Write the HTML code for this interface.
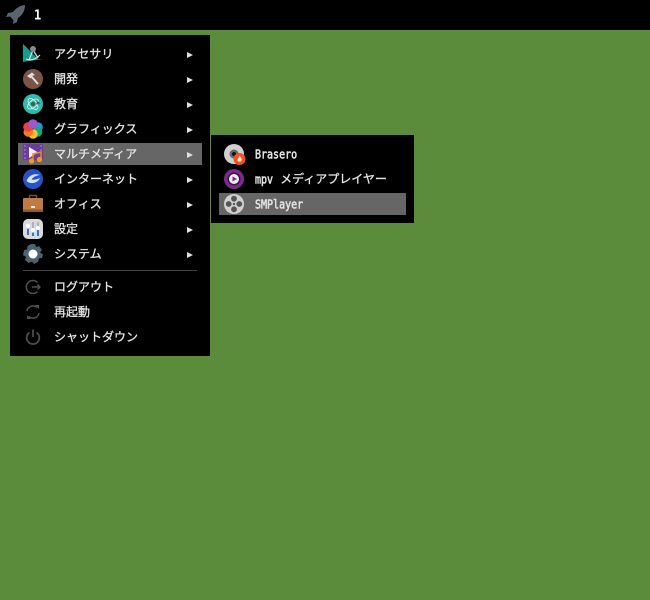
<!DOCTYPE html>
<html><head><meta charset="utf-8"><style>
html,body{margin:0;padding:0}
body{width:650px;height:600px;background:#5a8c3c;position:relative;overflow:hidden;font-family:"Noto Sans CJK JP","IPAGothic",sans-serif;color:#e4e4e4}
.abs,.t,.a,svg,.hl{position:absolute}
.t{font-size:12px;line-height:16px;white-space:nowrap;-webkit-text-stroke:0.3px #e4e4e4}
.m{display:inline-block;font-family:"DejaVu Sans Mono",monospace;font-size:10px;transform:scaleY(1.2);-webkit-text-stroke:0.45px #e4e4e4}
.a{width:0;height:0;border-left:6px solid #e0e0e0;border-top:3px solid transparent;border-bottom:3px solid transparent;left:187px}
</style></head><body>
<div class="abs" style="left:0;top:0;width:650px;height:30px;background:#000"></div>
<svg style="left:5px;top:4px" width="21" height="21" viewBox="0 0 21 21"><path d="M20 1C15 1.500 11 4 8 8L3 9 1 13 5 12.500 8.500 16 8 20 12 18 13 14C18 11 20 6 20 1Z" fill="#5a646e"/></svg>
<div class="t" style="left:34px;top:7px;font-family:'DejaVu Sans Mono';font-weight:700;font-size:12px;color:#fff;transform:scaleY(1.1);-webkit-text-stroke:0">1</div>
<div class="abs" style="left:10px;top:35px;width:200px;height:321px;background:#000"></div>
<div class="hl" style="left:18px;top:143px;width:184px;height:22px;background:#666"></div>
<div class="abs" style="left:23px;top:270px;width:174px;height:1px;background:#444"></div>

<svg style="left:23px;top:43px" width="20" height="20" viewBox="0 0 20 20"><path d="M0 1 15 16 20 16 6 18 0 19Z" fill="#12a08e"/><path d="M0 1 9 10 0 19Z" fill="#12a08e"/><path d="M10 7 6 17M10 7 15 15M3 16Q10 19 17 12" stroke="#e0e0e0" stroke-width="1.200" fill="none"/><circle cx="10" cy="6" r="3" fill="#8a8a8a"/></svg>
<svg style="left:23px;top:69px" width="20" height="20" viewBox="0 0 20 20"><circle cx="10" cy="10" r="10" fill="#795548"/><path d="M8 7 15 15" stroke="#ddd" stroke-width="2"/><path d="M4 7 9 3.500 12 6 9 7 7.500 9.500Z" fill="#ddd"/></svg>
<svg style="left:23px;top:94px" width="20" height="20" viewBox="0 0 20 20"><circle cx="10" cy="10" r="10" fill="#2dbdae"/><ellipse cx="10" cy="10" rx="6.500" ry="3.500" transform="rotate(-40 10 10)" fill="none" stroke="#e8f5f3" stroke-width=".8"/><ellipse cx="10" cy="10" rx="6.500" ry="3.500" transform="rotate(50 10 10)" fill="none" stroke="#e8f5f3" stroke-width=".8"/><circle cx="10" cy="10" r="2" fill="#555"/><circle cx="15" cy="9" r="1.500" fill="#555"/></svg>
<svg style="left:23px;top:119px" width="20" height="20" viewBox="0 0 20 20"><circle cx="15" cy="8" r="4.800" fill="#1e9bd0"/><circle cx="14.500" cy="13" r="4.800" fill="#1aa57a"/><circle cx="10" cy="15" r="4.800" fill="#fbc02d"/><circle cx="5.300" cy="13" r="4.800" fill="#f57c20"/><circle cx="5" cy="8" r="4.800" fill="#ee3f45"/><circle cx="10" cy="5" r="4.800" fill="#9b59c9"/></svg>
<svg style="left:23px;top:144px" width="21" height="20" viewBox="0 0 21 20"><rect x="0" y="0" width="20" height="16" fill="#6a3c9e"/><path d="M1 1h2v2h-2zM1 5h2v2h-2zM1 9h2v2h-2zM1 13h2v2h-2zM17 1h2v2h-2zM17 5h2v2h-2z" fill="#8a62bc"/><path d="M6 3 15 8.500 6 14Z" fill="#f4f0fa"/><path d="M10 16V10L18 8V15" stroke="#f08a18" stroke-width="1.500" fill="none"/><circle cx="8.500" cy="17" r="2.600" fill="#f59a1c"/><circle cx="16.500" cy="15.500" r="2.600" fill="#f59a1c"/></svg>
<svg style="left:23px;top:169px" width="20" height="20" viewBox="0 0 20 20"><circle cx="10" cy="10" r="10" fill="#2a50c8"/><path d="M3.500 12C6 6 11 4 17 6 13 6.500 10 8 8.500 10.500 11 11 14 10.500 17 9 15 14 8 16 3.500 12Z" fill="#cfe4f5"/></svg>
<svg style="left:23px;top:194px" width="20" height="20" viewBox="0 0 20 20"><path d="M6.500 4V1.500H13.500V4" stroke="#7a4a26" stroke-width="1.500" fill="none"/><rect x="0" y="4" width="20" height="14" rx="1" fill="#c07a42"/><rect x="0" y="15.500" width="20" height="2.500" fill="#8e5a30"/><rect x="8" y="12" width="4" height="2" fill="#f4ece4"/></svg>
<svg style="left:23px;top:219px" width="20" height="20" viewBox="0 0 20 20"><rect width="20" height="20" rx="5" fill="#d8dade"/><path d="M5 5v11M10 3v14M15 3v14" stroke="#a0a6ae" stroke-width="1.500"/><path d="M5 10v6M10 14v3M15 11v6" stroke="#2a78d8" stroke-width="2"/><circle cx="5" cy="7" r="2" fill="#fff"/><circle cx="10" cy="11" r="2" fill="#fff"/><circle cx="15" cy="9" r="2" fill="#fff"/></svg>
<svg style="left:23px;top:244px" width="20" height="20" viewBox="0 0 20 20"><path d="M8 0H12L13 3 16 2 19 6 17 8.500 20 10.500 19 14 16 14.500 15 18 11 20 9 17.500 5.500 19 2 16 3 13 0 11 1 6 4 5.500 4.500 2Z" fill="#4a6272"/><circle cx="10" cy="10" r="4.500" fill="#fff"/></svg>
<svg style="left:25px;top:279px" width="16" height="16" viewBox="0 0 16 16" fill="none" stroke="#505050" stroke-width="1.500"><path d="M12.500 3.500A6.500 6.500 0 1 0 12.500 12.500"/><path d="M7 8H15M12.500 5.500 15 8 12.500 10.500"/></svg>
<svg style="left:24px;top:304px" width="18" height="16" viewBox="0 0 18 16" fill="none" stroke="#505050" stroke-width="1.500"><path d="M3 7A6 6 0 0 1 13 3.500M15 9A6 6 0 0 1 5 12.500"/><path d="M11 1h4v4zM7 15H3v-4z" fill="#505050" stroke="none"/></svg>
<svg style="left:25px;top:329px" width="16" height="16" viewBox="0 0 16 16" fill="none" stroke="#505050" stroke-width="1.700"><path d="M4.500 3.500A6.300 6.300 0 1 0 11.500 3.500M8 0.500V8"/></svg>

<div class="t" style="left:54px;top:46px">アクセサリ</div>
<div class="t" style="left:54px;top:71px">開発</div>
<div class="t" style="left:54px;top:96px">教育</div>
<div class="t" style="left:54px;top:121px">グラフィックス</div>
<div class="t" style="left:54px;top:146px">マルチメディア</div>
<div class="t" style="left:54px;top:171px">インターネット</div>
<div class="t" style="left:54px;top:196px">オフィス</div>
<div class="t" style="left:54px;top:221px">設定</div>
<div class="t" style="left:54px;top:246px">システム</div>
<div class="t" style="left:54px;top:279px">ログアウト</div>
<div class="t" style="left:54px;top:304px">再起動</div>
<div class="t" style="left:54px;top:329px">シャットダウン</div>
<div class="a" style="top:52px"></div><div class="a" style="top:77px"></div><div class="a" style="top:102px"></div><div class="a" style="top:127px"></div><div class="a" style="top:152px"></div><div class="a" style="top:177px"></div><div class="a" style="top:202px"></div><div class="a" style="top:227px"></div><div class="a" style="top:252px"></div>

<div class="abs" style="left:211px;top:135px;width:203px;height:88px;background:#000"></div>
<div class="hl" style="left:219px;top:193px;width:187px;height:22px;background:#666"></div>
<svg style="left:224px;top:144px" width="22" height="22" viewBox="0 0 22 22"><circle cx="10" cy="10" r="10" fill="#d0d0d0"/><circle cx="10" cy="10" r="4.500" fill="#666"/><circle cx="10" cy="10" r="2" fill="#111"/><circle cx="15.500" cy="15" r="6" fill="#f4511e"/><path d="M15.500 11.500C17.500 14 18 15 17.500 16.500 17 18 14 18 13.500 16.500 13 15 15 14 15.500 11.500Z" fill="#ffe8d8"/></svg>
<svg style="left:224px;top:169px" width="20" height="20" viewBox="0 0 20 20"><circle cx="10" cy="10" r="10" fill="#7b2a8c"/><circle cx="10" cy="10" r="6.500" fill="#3a1545"/><circle cx="10" cy="10" r="5" fill="#eee"/><path d="M8.500 7.500 13 10 8.500 12.500Z" fill="#7b2a8c"/></svg>
<svg style="left:224px;top:194px" width="20" height="20" viewBox="0 0 20 20"><circle cx="10" cy="10" r="10" fill="#d0d0d0"/><circle cx="10" cy="4.700" r="2.900" fill="#555"/><circle cx="10" cy="15.300" r="2.900" fill="#555"/><circle cx="4.700" cy="10" r="2.900" fill="#555"/><circle cx="15.300" cy="10" r="2.900" fill="#555"/><circle cx="10" cy="10" r="1.200" fill="#555"/></svg>
<div class="t" style="left:255px;top:146px"><span class="m">Brasero</span></div>
<div class="t" style="left:255px;top:171px"><span class="m">mpv</span><span style="margin-left:7px">メディアプレイヤー</span></div>
<div class="t" style="left:255px;top:196px"><span class="m">SMPlayer</span></div>
</body></html>
